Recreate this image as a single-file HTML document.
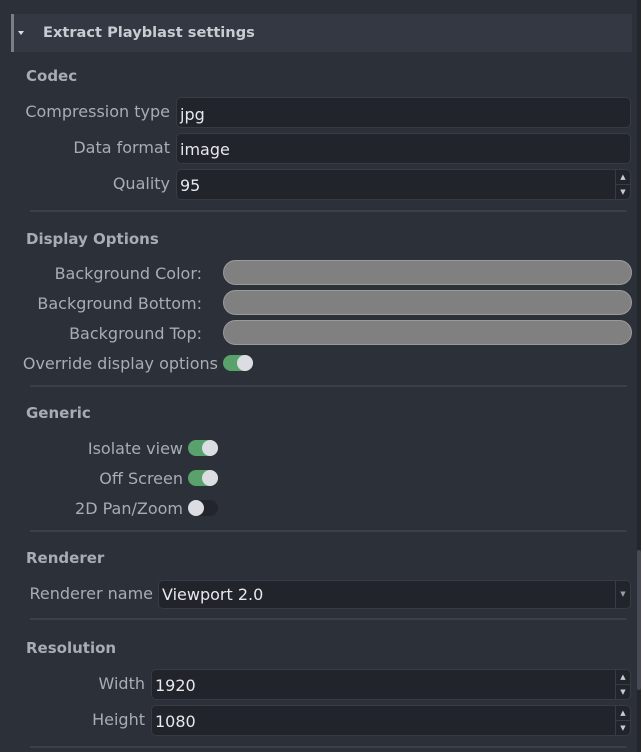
<!DOCTYPE html>
<html><head><meta charset="utf-8"><style>
*{margin:0;padding:0;box-sizing:border-box}
body{width:641px;height:752px;background:#2c3038;position:relative;overflow:hidden;font-family:"DejaVu Sans","Liberation Sans",sans-serif;font-size:16px;color:#a9adb3}
.a{position:absolute}
.hdr{left:11px;top:14px;width:621px;height:38px;background:#333843;border-left:3px solid #7a7e85}
.ttl{left:43px;top:24px;font-weight:bold;font-size:14.6px;color:#c8ccd1}
.h{left:26px;font-weight:bold;font-size:15px;color:#a9adb3}
.lbl{text-align:right;white-space:nowrap;line-height:20px}
.inp{background:#21242b;border:1px solid #373b44;border-radius:5px;color:#e6e8eb;padding-left:3px;line-height:31px}
.sep{left:30px;width:597px;height:2px;background:#3a3f48}
.bar{left:223px;width:409px;height:25px;background:#808080;border:1px solid #9a9a9a;border-radius:13px}
.tg{width:30px;height:16px;border-radius:8px;background:#5aa26c}
.tg::after{content:"";position:absolute;top:0;right:0;width:16px;height:16px;border-radius:8px;background:#dcdde2}
.tg.off{background:#22252b}
.tg.off::after{left:0;right:auto}
.sp{position:absolute;right:0;width:15px;height:50%;border-left:1px solid #373b44;color:#c8ccd1;font-size:7px;text-align:center;line-height:14px}
</style></head><body>
<div class="a hdr"></div>
<div class="a" style="left:18px;top:31px;width:0;height:0;border-left:3px solid transparent;border-right:3px solid transparent;border-top:4px solid #dcdde2"></div>
<div class="a ttl">Extract Playblast settings</div>

<div class="a h" style="top:67px">Codec</div>
<div class="a lbl" style="right:471px;top:102px">Compression type</div>
<div class="a inp" style="left:176px;top:97px;width:455px;height:31px;line-height:33px">jpg</div>
<div class="a lbl" style="right:471px;top:138px">Data format</div>
<div class="a inp" style="left:176px;top:133px;width:455px;height:31px">image</div>
<div class="a lbl" style="right:471px;top:174px">Quality</div>
<div class="a inp" style="left:176px;top:169px;width:455px;height:31px">95<div class="sp" style="top:0;border-bottom:1px solid #373b44">▲</div><div class="sp" style="bottom:0">▼</div></div>
<div class="a sep" style="top:210px"></div>

<div class="a h" style="top:230px">Display Options</div>
<div class="a lbl" style="right:439px;top:264px">Background Color:</div>
<div class="a bar" style="top:260px"></div>
<div class="a lbl" style="right:439px;top:294px">Background Bottom:</div>
<div class="a bar" style="top:290px"></div>
<div class="a lbl" style="right:439px;top:324px">Background Top:</div>
<div class="a bar" style="top:320px"></div>
<div class="a lbl" style="right:423px;top:354px">Override display options</div>
<div class="a tg" style="left:223px;top:355px"></div>
<div class="a sep" style="top:385px"></div>

<div class="a h" style="top:404px">Generic</div>
<div class="a lbl" style="right:458px;top:439px">Isolate view</div>
<div class="a tg" style="left:188px;top:440px"></div>
<div class="a lbl" style="right:458px;top:469px">Off Screen</div>
<div class="a tg" style="left:188px;top:470px"></div>
<div class="a lbl" style="right:458px;top:499px">2D Pan/Zoom</div>
<div class="a tg off" style="left:188px;top:500px"></div>
<div class="a sep" style="top:530px"></div>

<div class="a h" style="top:549px">Renderer</div>
<div class="a lbl" style="right:488px;top:584px">Renderer name</div>
<div class="a inp" style="left:158px;top:580px;width:473px;height:29px;line-height:28px">Viewport 2.0<div class="sp" style="top:0;height:100%;line-height:27px;color:#9a9da3">▼</div></div>
<div class="a sep" style="top:618px"></div>

<div class="a h" style="top:639px">Resolution</div>
<div class="a lbl" style="right:496px;top:674px">Width</div>
<div class="a inp" style="left:151px;top:669px;width:480px;height:31px">1920<div class="sp" style="top:0;border-bottom:1px solid #373b44">▲</div><div class="sp" style="bottom:0">▼</div></div>
<div class="a lbl" style="right:496px;top:710px">Height</div>
<div class="a inp" style="left:151px;top:705px;width:480px;height:31px">1080<div class="sp" style="top:0;border-bottom:1px solid #373b44">▲</div><div class="sp" style="bottom:0">▼</div></div>
<div class="a sep" style="top:746px"></div>

<div class="a" style="left:637px;top:0;width:4px;height:752px;background:#23262c"></div>
<div class="a" style="left:637px;top:550px;width:4px;height:140px;background:#454a54;border-radius:2px"></div>
</body></html>
